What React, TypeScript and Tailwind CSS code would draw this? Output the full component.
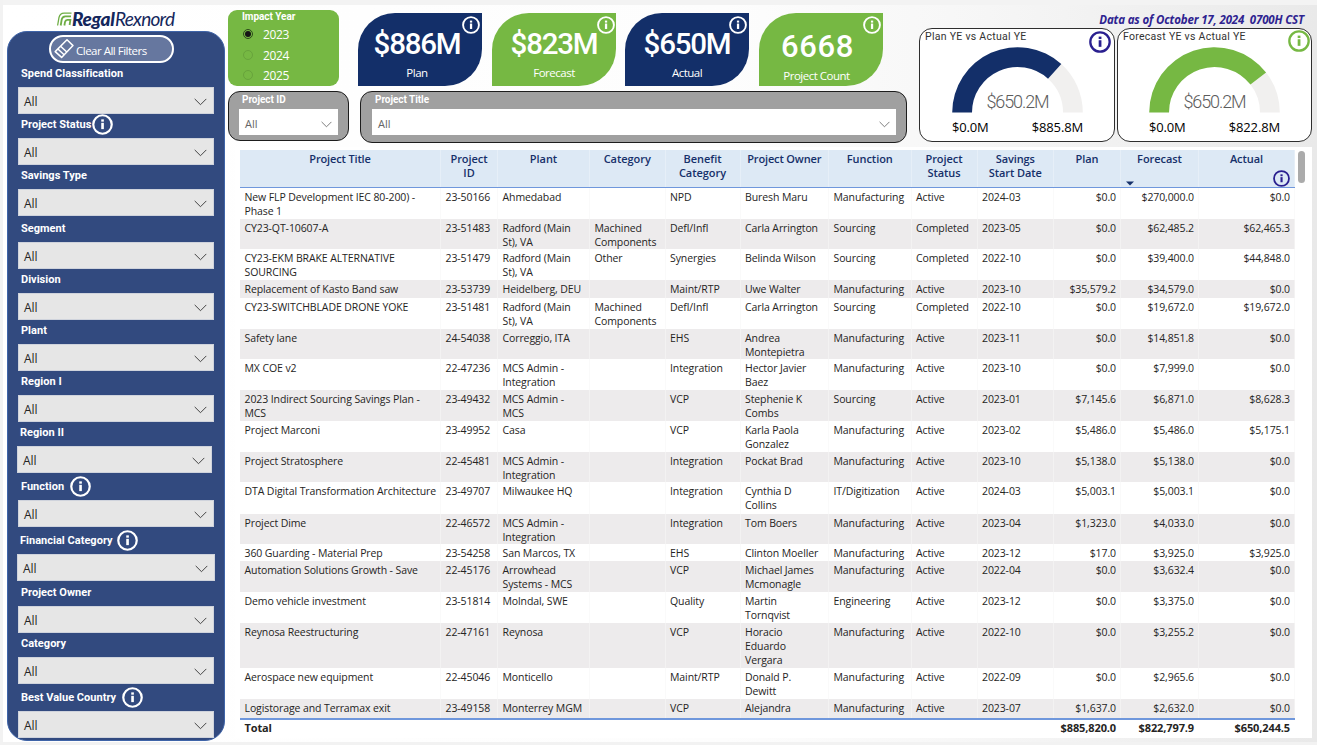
import React from 'react';

type InfoProps = { size: number; className?: string };

function Info({ size, className = '' }: InfoProps) {
  return (
    <svg width={size} height={size} viewBox="0 0 20 20" fill="none" className={`shrink-0 ${className}`}>
      <circle cx="10" cy="10" r="8.8" stroke="currentColor" strokeWidth="2.1" />
      <rect x="8.8" y="8.4" width="2.5" height="6" fill="currentColor" />
      <rect x="8.8" y="5.1" width="2.5" height="2.2" fill="currentColor" />
    </svg>
  );
}

function Chevron({ className = '' }: { className?: string }) {
  return (
    <svg width="13" height="8" viewBox="0 0 13 8" fill="none" className={`shrink-0 ${className}`}>
      <path d="M0.7 0.9 L6.5 6.7 L12.3 0.9" stroke="currentColor" strokeWidth="1" />
    </svg>
  );
}

type Filter = { label: string; area: string; labelWidth?: string; box?: string };

const filters: Filter[] = [
  { label: 'Spend Classification', area: 'h-[24px] pl-[14px]' },
  { label: 'Project Status', area: 'h-[24px] pl-[14px]', labelWidth: 'w-[71px]' },
  { label: 'Savings Type', area: 'h-[24px] pl-[14px]' },
  { label: 'Segment', area: 'h-[26px] pl-[14px]' },
  { label: 'Division', area: 'h-[24px] pl-[14px]' },
  { label: 'Plant', area: 'h-[24px] pl-[14px]' },
  { label: 'Region I', area: 'h-[24px] pl-[14px]' },
  { label: 'Region II', area: 'h-[24px] pl-[13px]', box: 'ml-[10px] w-[195px]' },
  { label: 'Function', area: 'h-[27px] pl-[14px]', labelWidth: 'w-[49px]' },
  { label: 'Financial Category', area: 'h-[27px] pl-[13px]', labelWidth: 'w-[97px]', box: 'ml-[10px] w-[198px]' },
  { label: 'Project Owner', area: 'h-[25px] pl-[14px]' },
  { label: 'Category', area: 'h-[24px] pl-[14px]' },
  { label: 'Best Value Country', area: 'h-[27px] pl-[14px]', labelWidth: 'w-[101px]' },
];

function Sidebar() {
  return (
    <aside className="ml-[7px] flex w-[218px] shrink-0 flex-col">
      <div className="flex h-[31px] items-end pl-[50px] text-[#14275c]">
        <svg width="15" height="15" viewBox="0 0 15 15" fill="none" className="mb-[4px] shrink-0">
          <path d="M0.6 13.5 L2 5.5 Q3 1.3 7 1.2 H14.5" stroke="#6fae45" strokeWidth="1.3" />
          <path d="M3.7 13.5 L4.7 7.5 Q5.4 4.4 8.4 4.3 H14" stroke="#6fae45" strokeWidth="1.8" />
          <path d="M7.4 13.5 L8 10 Q8.5 7.9 10.3 7.8 H13.4 L12.6 13" stroke="#6fae45" strokeWidth="1.8" />
        </svg>
        <div className="flex font-['Lato'] text-[19px] leading-[24px] whitespace-nowrap italic">
          <span className="w-[43px] font-black tracking-[-0.35px]">Regal</span>
          <span className="font-normal tracking-[-0.75px]">Rexnord</span>
        </div>
      </div>
      <div className="flex h-[710px] flex-col rounded-[20px] border border-[#3f64a8] bg-[#324a7f]">
        <button className="mt-[3px] ml-[41px] flex h-[28px] w-[125px] shrink-0 items-center rounded-full border-2 border-white bg-[#66779f] pl-[2px] text-white">
          <svg width="22" height="22" viewBox="0 0 22 22" fill="none" stroke="white" strokeWidth="1.5" strokeLinejoin="round">
            <path d="M14 1.8 L20 7.6 L8.6 19.4 L2.2 13.6 Z" />
            <path d="M7.6 8.3 L13.8 14 M4.9 11 L11.1 16.8" />
          </svg>
          <span className="pt-[4px] pl-[1px] text-[11.5px] tracking-[-0.5px] whitespace-nowrap">Clear All Filters</span>
        </button>
        {filters.map((f) => (
          <div key={f.label} className="-ml-px flex shrink-0 flex-col">
            <div className={`flex items-end ${f.area}`}>
              <span
                className={`pb-[3px] font-['Roboto'] text-[11px] leading-[20px] font-bold tracking-[0.02px] whitespace-nowrap text-white ${f.labelWidth ?? ''}`}
              >
                {f.label}
              </span>
              {f.labelWidth && <Info size={21} className="mb-[3px] text-white" />}
            </div>
            <div
              className={`flex h-[27px] items-center justify-between border border-[#cfd3dc] bg-[#e6e6e6] pr-[6px] pl-[5px] text-[12px] text-[#252423] ${f.box ?? 'ml-[11px] w-[196px]'}`}
            >
              <span className="pt-[3px]">All</span>
              <Chevron className="mt-[2px] text-[#444]" />
            </div>
          </div>
        ))}
      </div>
    </aside>
  );
}

const years = ['2023', '2024', '2025'];

function ImpactYear() {
  return (
    <div className="h-[76px] w-[111px] shrink-0 rounded-[9px] bg-[#76b843] pl-[14px] text-white">
      <div className="h-[14px] font-['Roboto'] text-[10px] leading-[14px] font-bold tracking-[-0.05px]">Impact Year</div>
      {years.map((y, i) => (
        <div key={y} className="flex h-[20.5px] items-center">
          <span
            className={`ml-[1px] flex size-[10px] items-center justify-center rounded-full border ${i === 0 ? 'border-[#2c4a1a]' : 'border-[#68a33c]'}`}
          >
            {i === 0 && <span className="size-[6px] rounded-full bg-[#151515]" />}
          </span>
          <span className="ml-[10px] pt-[1px] text-[12px] leading-[19px] tracking-[-0.4px]">{y}</span>
        </div>
      ))}
    </div>
  );
}

const kpis = [
  { value: '$886M', label: 'Plan', card: 'bg-[#132f69] ml-[19px]', val: 'pt-[13px] pr-[6px] text-[29.5px] tracking-[-1.2px]', lab: 'pr-[6px]', icon: 'right-[2px]' },
  { value: '$823M', label: 'Forecast', card: 'bg-[#76b843] ml-[10px]', val: 'pt-[13px] text-[29.5px] tracking-[-1.2px]', lab: '', icon: 'right-[1px]' },
  { value: '$650M', label: 'Actual', card: 'bg-[#132f69] ml-[9px]', val: 'pt-[13px] text-[29.5px] tracking-[-1.2px]', lab: '', icon: 'right-[2px]' },
  { value: '6668', label: 'Project Count', card: 'bg-[#76b843] ml-[10px]', val: 'pt-[15px] pr-[7px] pb-[1px] text-[31px] tracking-[0.6px]', lab: 'pr-[9px]', icon: 'right-[2px]' },
];

function Kpis() {
  return (
    <>
      {kpis.map((k) => (
        <div
          key={k.label}
          className={`relative mt-[3px] flex h-[73px] w-[124px] shrink-0 flex-col items-center rounded-tl-[37px] rounded-br-[37px] text-white ${k.card}`}
        >
          <div className={`font-['Roboto'] leading-[37px] font-medium ${k.val}`}>{k.value}</div>
          <div className={`text-[11.5px] leading-[20px] tracking-[-0.5px] whitespace-nowrap ${k.lab}`}>{k.label}</div>
          <Info size={18} className={`absolute top-[3px] ${k.icon}`} />
        </div>
      ))}
    </>
  );
}

function TopSlicer({ title, size }: { title: string; size: string }) {
  return (
    <div className={`shrink-0 rounded-[12px] border-[1.5px] border-[#1d1d1d] bg-[#a0a0a0] ${size}`}>
      <div className="h-[17px] pl-[3px] font-['Roboto'] text-[10px] leading-[15px] font-bold tracking-[-0.05px] text-white">{title}</div>
      <div className="flex h-[26px] items-center justify-between bg-white pr-[6px] pl-[6px] text-[11px] text-[#666]">
        <span className="pt-[4px]">All</span>
        <Chevron className="mt-[5px] h-[7px] w-[11px]" />
      </div>
    </div>
  );
}

function arc(fraction: number, from = 0) {
  const point = (r: number, t: number) => {
    const a = Math.PI * (1 - t);
    return `${(65.5 + r * Math.cos(a)).toFixed(2)} ${(65.5 - r * Math.sin(a)).toFixed(2)}`;
  };
  return `M${point(65.3, from)} A65.3 65.3 0 0 1 ${point(65.3, fraction)} L${point(45.5, fraction)} A45.5 45.5 0 0 0 ${point(45.5, from)} Z`;
}

type GaugeProps = { title: string; max: string; ratio: number; fill: string; size: string; pad: string; info: string };

function Gauge({ title, max, ratio, fill, size, pad, info }: GaugeProps) {
  return (
    <div className={`relative h-[114px] shrink-0 rounded-[13px] border border-[#2e2e2e] bg-white ${size}`}>
      <div className="h-[18px] pl-[5px] font-['Roboto'] text-[10.5px] leading-[15px] tracking-[0.28px] whitespace-nowrap text-[#333]">{title}</div>
      <div className={`flex w-[163px] flex-col ${pad}`}>
        <div className="grid h-[66px] w-[131px]">
          <svg width="131" height="66" viewBox="0 0 131 66" className="col-start-1 row-start-1">
            <path d={arc(1, ratio)} fill="#f1f0ef" />
            <path d={arc(ratio)} fill={fill} />
          </svg>
          <span className="col-start-1 row-start-1 self-end justify-self-center font-['Roboto'] text-[18px] leading-[23px] font-light tracking-[-1.1px] text-[#5c5c5c]">
            $650.2M
          </span>
        </div>
        <div className="flex w-[131px] justify-between pt-[4px] text-[13px] leading-[20px] tracking-[-0.15px] text-black">
          <span>$0.0M</span>
          <span>{max}</span>
        </div>
      </div>
      <Info size={22} className={`absolute ${info}`} />
    </div>
  );
}

const cols = 'grid grid-cols-[201px_57px_92px_75.5px_75px_88.5px_82.5px_66px_76.5px_67px_78px_96px]';

const headers = [
  'Project Title', 'Project ID', 'Plant', 'Category', 'Benefit Category', 'Project Owner',
  'Function', 'Project Status', 'Savings Start Date', 'Plan', 'Forecast', 'Actual',
];

const rows: [string, ...string[]][] = [
  ['h-[31px]', 'New FLP Development IEC 80-200) -|Phase 1', '23-50166', 'Ahmedabad', '', 'NPD', 'Buresh Maru', 'Manufacturing', 'Active', '2024-03', '$0.0', '$270,000.0', '$0.0'],
  ['h-[30px]', 'CY23-QT-10607-A', '23-51483', 'Radford (Main|St), VA', 'Machined|Components', 'Defl/Infl', 'Carla Arrington', 'Sourcing', 'Completed', '2023-05', '$0.0', '$62,485.2', '$62,465.3'],
  ['h-[31px]', 'CY23-EKM BRAKE ALTERNATIVE|SOURCING', '23-51479', 'Radford (Main|St), VA', 'Other', 'Synergies', 'Belinda Wilson', 'Sourcing', 'Completed', '2022-10', '$0.0', '$39,400.0', '$44,848.0'],
  ['h-[18px]', 'Replacement of Kasto Band saw', '23-53739', 'Heidelberg, DEU', '', 'Maint/RTP', 'Uwe Walter', 'Manufacturing', 'Active', '2023-10', '$35,579.2', '$34,579.0', '$0.0'],
  ['h-[31px]', 'CY23-SWITCHBLADE DRONE YOKE', '23-51481', 'Radford (Main|St), VA', 'Machined|Components', 'Defl/Infl', 'Carla Arrington', 'Sourcing', 'Completed', '2022-10', '$0.0', '$19,672.0', '$19,672.0'],
  ['h-[30px]', 'Safety lane', '24-54038', 'Correggio, ITA', '', 'EHS', 'Andrea|Montepietra', 'Manufacturing', 'Active', '2023-11', '$0.0', '$14,851.8', '$0.0'],
  ['h-[31px]', 'MX COE v2', '22-47236', 'MCS Admin -|Integration', '', 'Integration', 'Hector Javier|Baez', 'Manufacturing', 'Active', '2023-10', '$0.0', '$7,999.0', '$0.0'],
  ['h-[31px]', '2023 Indirect Sourcing Savings Plan -|MCS', '23-49432', 'MCS Admin -|MCS', '', 'VCP', 'Stephenie K|Combs', 'Sourcing', 'Active', '2023-01', '$7,145.6', '$6,871.0', '$8,628.3'],
  ['h-[31px]', 'Project Marconi', '23-49952', 'Casa', '', 'VCP', 'Karla Paola|Gonzalez', 'Manufacturing', 'Active', '2023-02', '$5,486.0', '$5,486.0', '$5,175.1'],
  ['h-[30px]', 'Project Stratosphere', '22-45481', 'MCS Admin -|Integration', '', 'Integration', 'Pockat Brad', 'Manufacturing', 'Active', '2023-10', '$5,138.0', '$5,138.0', '$0.0'],
  ['h-[32px]', 'DTA Digital Transformation Architecture', '23-49707', 'Milwaukee HQ', '', 'Integration', 'Cynthia D|Collins', 'IT/Digitization', 'Active', '2024-03', '$5,003.1', '$5,003.1', '$0.0'],
  ['h-[30px]', 'Project Dime', '22-46572', 'MCS Admin -|Integration', '', 'Integration', 'Tom Boers', 'Manufacturing', 'Active', '2023-04', '$1,323.0', '$4,033.0', '$0.0'],
  ['h-[17px]', '360 Guarding - Material Prep', '23-54258', 'San Marcos, TX', '', 'EHS', 'Clinton Moeller', 'Manufacturing', 'Active', '2023-12', '$17.0', '$3,925.0', '$3,925.0'],
  ['h-[31px]', 'Automation Solutions Growth - Save', '22-45176', 'Arrowhead|Systems - MCS', '', 'VCP', 'Michael James|Mcmonagle', 'Manufacturing', 'Active', '2022-04', '$0.0', '$3,632.4', '$0.0'],
  ['h-[31px]', 'Demo vehicle investment', '23-51814', 'Molndal, SWE', '', 'Quality', 'Martin|Tornqvist', 'Engineering', 'Active', '2023-12', '$0.0', '$3,375.0', '$0.0'],
  ['h-[45px]', 'Reynosa Reestructuring', '22-47161', 'Reynosa', '', 'VCP', 'Horacio|Eduardo|Vergara', 'Manufacturing', 'Active', '2022-10', '$0.0', '$3,255.2', '$0.0'],
  ['h-[31px]', 'Aerospace new equipment', '22-45046', 'Monticello', '', 'Maint/RTP', 'Donald P.|Dewitt', 'Manufacturing', 'Active', '2022-09', '$0.0', '$2,965.6', '$0.0'],
  ['h-[19px]', 'Logistorage and Terramax exit', '23-49158', 'Monterrey MGM', '', 'VCP', 'Alejandra', 'Manufacturing', 'Active', '2023-07', '$1,637.0', '$2,632.0', '$0.0'],
];

function Table() {
  return (
    <section className="ml-[7px] flex h-[591px] w-[1077px] bg-white pt-[3px] pl-[5px]">
      <div className="w-[1055px] shrink-0">
        <div className={`${cols} relative h-[38px] border-b border-[#6f97dc] bg-[#dde9f5]`}>
          {headers.map((h, i) => (
            <div
              key={h}
              className={`flex justify-center border-r border-[#e6eff8] pt-[2px] text-center text-[11px] leading-[14px] font-semibold text-[#16306a] ${i === 5 || i === 0 ? 'tracking-[-0.15px] whitespace-nowrap' : i === 8 ? 'px-[10px] tracking-[-0.1px]' : 'px-[4px] tracking-[-0.05px]'}`}
            >
              {h}
            </div>
          ))}
          <svg width="8" height="5" viewBox="0 0 8 5" className="absolute top-[31px] left-[886px]">
            <path d="M0 0.5 H8 L4 4.5 Z" fill="#16306a" />
          </svg>
          <Info size={17} className="absolute top-[20px] right-[5px] text-[#2a1f8f]" />
        </div>
        {rows.map(([height, ...cells], r) => (
          <div key={cells[1]} className={`${cols} overflow-hidden ${height} ${r % 2 ? 'bg-[#edebec]' : 'bg-white'}`}>
            {cells.map((c, i) => (
              <div
                key={i}
                className={`border-r pt-[2px] text-[10.5px] leading-[14px] whitespace-pre text-[#252423] ${r % 2 ? 'border-[#f3f2f2]' : 'border-[#fafafa]'} ${i > 8 ? 'pr-[4px] text-right tracking-[-0.1px]' : 'pl-[4.5px] tracking-[-0.1px]'}`}
              >
                {c.replace(/\|/g, '\n')}
              </div>
            ))}
          </div>
        ))}
        <div className={`${cols} h-[20px] border-t-2 border-[#6f97dc] text-[11px] leading-[15px] font-bold tracking-[-0.12px] text-[#252423]`}>
          <span className="pl-[4.5px]">Total</span>
          <span className="col-start-10 pr-[5px] text-right">$885,820.0</span>
          <span className="pr-[5px] text-right">$822,797.9</span>
          <span className="pr-[5px] text-right">$650,244.5</span>
        </div>
      </div>
      <div className="mt-[1px] ml-[3px] h-[32px] w-[7px] rounded-full bg-[#ababab]" />
    </section>
  );
}

export default function App() {
  return (
    <div className="flex h-[745px] w-[1317px] flex-col overflow-hidden bg-[#f2f2f2] pl-[3px] font-['Open_Sans',sans-serif]">
      <div className="flex h-[742px] w-[1314px] border-t-[5px] border-[#f3f3f3] bg-[linear-gradient(90deg,#fff_0%,#fdfdfd_55%,#f6f6f6_75%,#e9e9e9_100%)]">
        <div className="-mt-[5px] -ml-[3px] flex">
          <Sidebar />
          <main className="flex w-[1089px] flex-col pl-[3px]">
            <div className="flex h-[147px] shrink-0">
              <div className="flex flex-col pt-[10px]">
                <div className="flex h-[81px]">
                  <ImpactYear />
                  <Kpis />
                </div>
                <div className="flex">
                  <TopSlicer title="Project ID" size="h-[50px] w-[121px] pr-[10px] pl-[10px]" />
                  <TopSlicer title="Project Title" size="ml-[11px] h-[52px] w-[547px] pr-[10px] pl-[11px]" />
                </div>
              </div>
              <div className="ml-[12px] w-[393px] shrink-0">
                <div className="h-[28px] pt-[12px] pr-[8px] text-right text-[11.5px] leading-[16px] font-bold tracking-[-0.16px] whitespace-pre text-[#2e2390] italic">
                  {'Data as of October 17, 2024  0700H CST'}
                </div>
                <div className="flex gap-[2px]">
                  <Gauge title="Plan YE vs Actual YE" max="$885.8M" ratio={0.734} fill="#132f69" size="w-[196px]" pad="pl-[32px]" info="top-[2px] right-[3px] text-[#2a1f8f]" />
                  <Gauge title="Forecast YE vs Actual YE" max="$822.8M" ratio={0.79} fill="#76b843" size="w-[195px]" pad="pl-[31px]" info="top-[1px] right-[1px] text-[#76b843]" />
                </div>
              </div>
            </div>
            <Table />
          </main>
        </div>
      </div>
    </div>
  );
}
